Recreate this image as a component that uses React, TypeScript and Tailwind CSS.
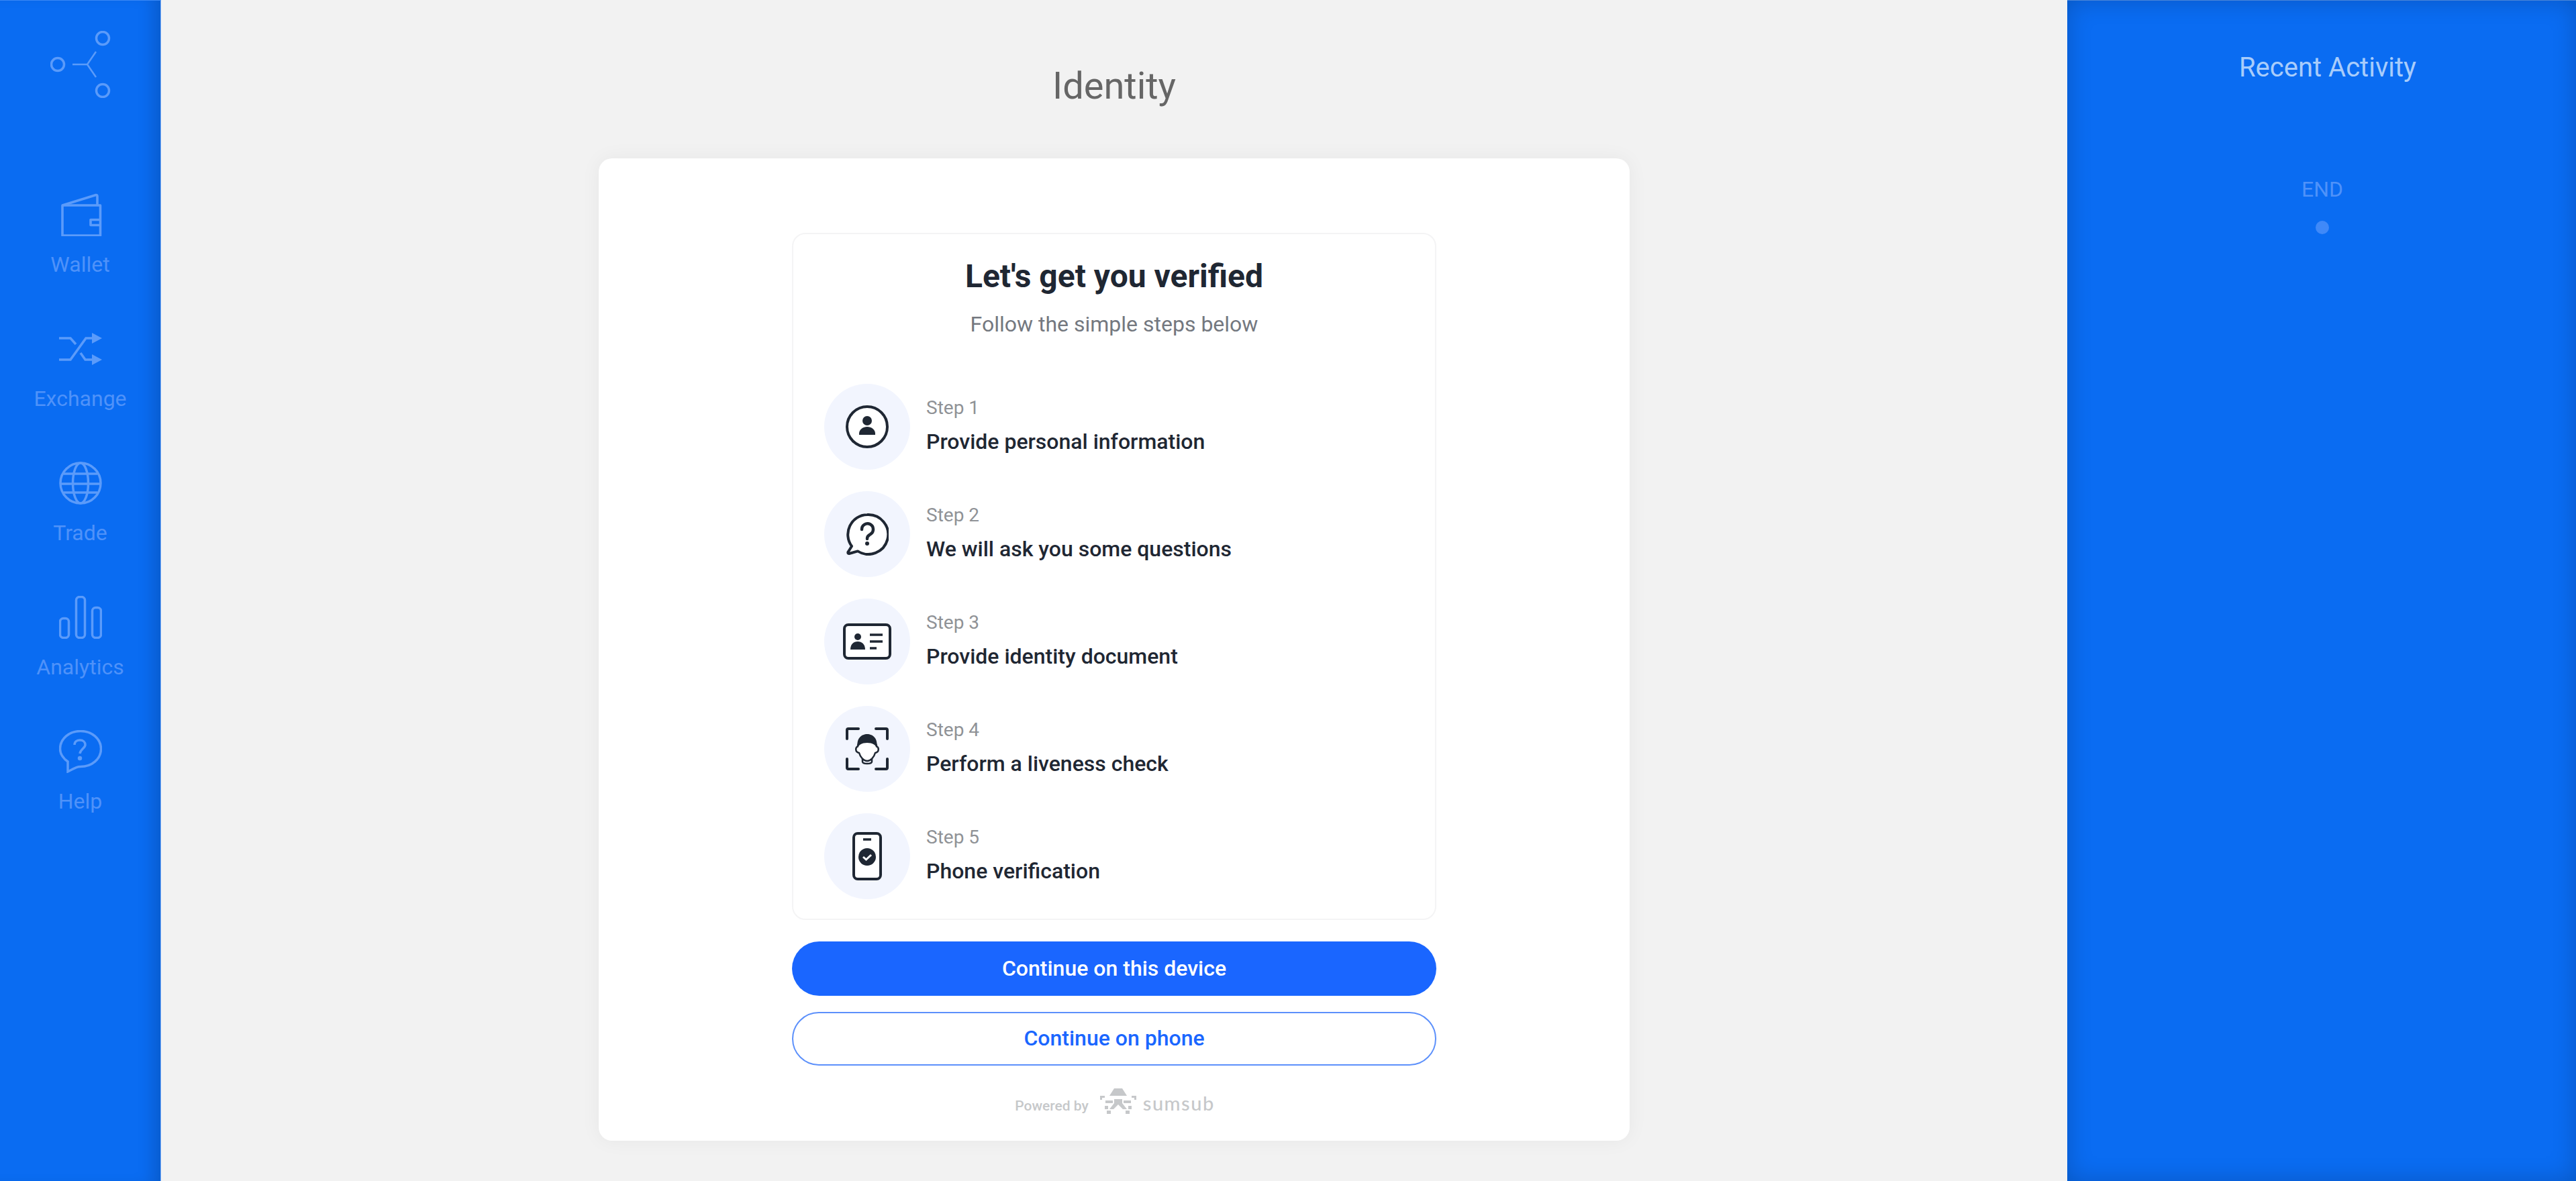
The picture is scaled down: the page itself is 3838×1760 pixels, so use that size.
import type { ReactNode } from "react";

const roboto = "font-['Roboto','Liberation_Sans',sans-serif]";

function NavItem({ label, icon }: { label: string; icon: ReactNode }) {
  return (
    <div className="flex h-[200px] w-full flex-col items-center">
      <div className="h-[64px] w-[64px] text-[#5b9bfa]">{icon}</div>
      <div className="mt-[21px] text-[32px] leading-[42px] text-[#4f92f9]">{label}</div>
    </div>
  );
}

const navItems = [
  {
    label: "Wallet",
    icon: (
      <svg viewBox="0 0 64 64" fill="none" stroke="currentColor" strokeWidth="3.600" strokeLinejoin="round">
        <path d="M5 18h56.500v45H5z" />
        <path d="M5 18l50-15.500q2 0 2 2V18" />
        <path d="M61 39.500H47V47.500H61" />
      </svg>
    ),
  },
  {
    label: "Exchange",
    icon: (
      <svg viewBox="0 0 64 64" fill="none" stroke="currentColor" strokeWidth="3.600">
        <path d="M0 16h17l8 9" />
        <path d="M0 48h17L40 16h10" />
        <path d="M32 38l7 10h10" />
        <path d="M49 8l15 8-15 8zM49 40l15 8-15 8z" fill="currentColor" stroke="none" />
      </svg>
    ),
  },
  {
    label: "Trade",
    icon: (
      <svg viewBox="0 0 64 64" fill="none" stroke="currentColor" strokeWidth="3.500">
        <circle cx="32" cy="32" r="30" />
        <ellipse cx="32" cy="32" rx="11.500" ry="30" />
        <path d="M7 18h50M2 33h60M7 46h50" />
      </svg>
    ),
  },
  {
    label: "Analytics",
    icon: (
      <svg viewBox="0 0 64 64" fill="none" stroke="currentColor" strokeWidth="3.500">
        <rect x="1.500" y="33.500" width="13" height="29" rx="5" />
        <rect x="25.500" y="1.500" width="13" height="61" rx="5" />
        <rect x="49.500" y="17.500" width="13" height="45" rx="5" />
      </svg>
    ),
  },
  {
    label: "Help",
    icon: (
      <svg viewBox="0 0 64 64" fill="none" stroke="currentColor" strokeWidth="3.500">
        <path d="M32 1.500C49 1.500 62.500 13 62.500 28S49 54.500 32 54.500C28 54.500 26 55 13 62V47C6 42 1.500 36 1.500 28 1.500 13 15 1.500 32 1.500Z" />
        <path d="M23 22c0-5 4-7 8-7 5 0 8 3 8 7 0 5-7 6-8 13" />
        <circle cx="31" cy="42" r="1.500" fill="currentColor" />
      </svg>
    ),
  },
];

const darkInk = "#1f2733";

const stepIcons = [
  <svg key="1" width="64" height="64" viewBox="0 0 64 64">
    <circle cx="32" cy="32" r="30" fill="#fff" stroke={darkInk} strokeWidth="4" />
    <circle cx="32" cy="23" r="7" fill={darkInk} />
    <path d="M20 44v-2c0-6 6-10 12-10s12 4 12 10v2z" fill={darkInk} />
  </svg>,
  <svg key="2" width="64" height="64" viewBox="0 0 64 64">
    <path
      d="M32 3A29.500 29.500 0 1 1 18 57.400L5 61C3 61 3 59 4 58L9 50A29.500 29.500 0 0 1 32 3Z"
      fill="#fff"
      stroke={darkInk}
      strokeWidth="4"
      strokeLinejoin="round"
    />
    <path d="M24 25a8.500 8.500 0 1 1 13 7c-3 2-5 3-5 7" fill="none" stroke={darkInk} strokeWidth="4.500" strokeLinecap="round" />
    <circle cx="32" cy="46" r="3" fill={darkInk} />
  </svg>,
  <svg key="3" width="72" height="54" viewBox="0 0 72 54">
    <rect x="2" y="2" width="68" height="50" rx="6" fill="#fff" stroke={darkInk} strokeWidth="4" />
    <circle cx="22" cy="20" r="5" fill={darkInk} />
    <path d="M11 39c0-8 5-12 11-12s11 4 11 12z" fill={darkInk} />
    <path d="M40 17h19M40 27h19M40 37h10" stroke={darkInk} strokeWidth="3.500" />
  </svg>,
  <svg key="4" width="64" height="64" viewBox="0 0 64 64" fill="none">
    <path
      d="M2 17V4q0-2 2-2h15M45 2h15q2 0 2 2v13M2 47v13q0 2 2 2h15M62 47v13q0 2-2 2H45"
      stroke={darkInk}
      strokeWidth="4"
      strokeLinecap="round"
    />
    <path d="M25 47v4c0 4 14 4 14 0v-4" stroke={darkInk} strokeWidth="2.500" />
    <path
      d="M18 28C14 30 14 37 20 38 22 45 27 50 32 50 37 50 42 45 44 38 50 37 50 30 46 28 46 22 38 18 32 18 26 18 18 22 18 28Z"
      fill="#fff"
      stroke={darkInk}
      strokeWidth="2.500"
    />
    <path d="M18 31C15 16 24 10 32 10 40 10 49 16 46 31 45 26 40 23 32 23 24 23 19 26 18 31Z" fill={darkInk} />
  </svg>,
  <svg key="5" width="44" height="72" viewBox="0 0 44 72">
    <rect x="2" y="2" width="40" height="68" rx="6" fill="#fff" stroke={darkInk} strokeWidth="4" />
    <path d="M16 11h12" stroke={darkInk} strokeWidth="3.500" />
    <circle cx="22" cy="37" r="13" fill={darkInk} />
    <path d="M16 37l4.500 4 7.500-7" fill="none" stroke="#fff" strokeWidth="3" />
  </svg>,
];

const steps = [
  "Provide personal information",
  "We will ask you some questions",
  "Provide identity document",
  "Perform a liveness check",
  "Phone verification",
];

function SumsubMark() {
  return (
    <svg className="block" width="54" height="38" viewBox="0 0 54 38" fill="#c6c8ca">
      <path d="M14 11L21 0h12l7 11z" />
      <path d="M0 11h7v3H3v3H0zM47 11h7v6h-3v-3h-4z" />
      <path d="M8 18h11v4H8zM21 16h12v6l7 9h-6l-7-7-7 7h-6l7-9zM35 18h11v4H35z" />
      <path d="M7 26h5v5H7zM42 26h5v5h-5zM10 33h6v5h-6zM38 33h6v5h-6z" />
    </svg>
  );
}

export default function App() {
  return (
    <div className={`flex h-screen w-full overflow-hidden bg-[#f2f2f2] ${roboto}`}>
      <aside className="flex h-full w-[240px] shrink-0 flex-col items-center border-r border-t border-r-[#7fb0f5] border-t-[#3a88f5] bg-[#0a6cf2] shadow-[inset_-22px_0_24px_-12px_rgba(0,0,0,0.16)]">
        <svg className="mt-[45px] text-[#5b9bfa]" width="90" height="100" viewBox="0 0 90 100" fill="none" stroke="currentColor" strokeWidth="3.500">
          <circle cx="11" cy="50" r="9.500" />
          <ellipse cx="78" cy="11" rx="9.500" ry="9.500" />
          <ellipse cx="78" cy="89" rx="9.500" ry="9.500" />
          <path d="M33 50h22l13-19M55 50l13 19" strokeWidth="2.500" />
        </svg>
        <nav className="mt-[142px] flex w-full flex-col items-center">
          {navItems.map((item) => (
            <NavItem key={item.label} label={item.label} icon={item.icon} />
          ))}
        </nav>
      </aside>

      <main className="flex h-full flex-1 flex-col items-center">
        <h1 className="mt-[96px] text-[56px] font-normal leading-[64px] text-[#666666]">Identity</h1>
        <section className="mt-[76px] flex h-[1464px] w-[1536px] flex-col items-center rounded-[20px] bg-white pt-[111px] shadow-[0_0_30px_rgba(0,0,0,0.05)]">
          <div className="flex h-[1024px] w-[960px] flex-col rounded-[20px] border-2 border-[#f4f4f5] pt-[35px]">
            <h2 className="text-center text-[48px] font-bold leading-[56px] text-[#1f2733]">Let's get you verified</h2>
            <p className="mt-[23px] text-center text-[32px] leading-[40px] text-[#74787f]">Follow the simple steps below</p>
            <ul className="mt-[69px] flex flex-col gap-[32px] pl-[46px]">
              {steps.map((title, i) => (
                <li key={title} className="flex h-[128px] items-center gap-[24px]">
                  <div className="flex h-[128px] w-[128px] items-center justify-center rounded-full bg-[#f2f5fe]">
                    {stepIcons[i]}
                  </div>
                  <div className="flex flex-col gap-[14px] pb-[6px]">
                    <div className="text-[28px] font-normal leading-[36px] text-[#8f9296]">Step {i + 1}</div>
                    <div className="text-[32px] font-medium leading-[36px] text-[#1f2733]">{title}</div>
                  </div>
                </li>
              ))}
            </ul>
          </div>
          <button className="mt-[32px] h-[81px] w-[960px] rounded-full bg-[#1a66ff] pb-[2px] text-[32px] font-medium text-white">
            Continue on this device
          </button>
          <button className="mt-[24px] h-[80px] w-[960px] rounded-full border-2 border-[#5c90fb] bg-white pb-[2px] text-[32px] font-medium text-[#1a66ff]">
            Continue on phone
          </button>
          <div className="ml-[2px] mt-[34px] flex h-[38px] items-start">
            <span className="mt-[13px] text-[21px] font-medium leading-[26px] text-[#c6c8ca]">Powered by</span>
            <span className="ml-[17px]">
              <SumsubMark />
            </span>
            <span className="ml-[10px] mt-[7px] font-['Lato',sans-serif] text-[29px] font-medium leading-[30px] tracking-[1.5px] text-[#c6c8ca]">sumsub</span>
          </div>
        </section>
      </main>

      <aside className="flex h-full w-[758px] shrink-0 flex-col items-center border-t border-[#4a86d8] bg-[#0a6cf2] shadow-[inset_0_0_36px_rgba(0,0,0,0.2)]">
        <h3 className="ml-[18px] mt-[77px] text-[40px] font-normal leading-[46px] text-[#a8ccfb]">Recent Activity</h3>
        <div className="ml-[2px] mt-[138px] text-[32px] leading-[40px] text-[#4f92f9]">END</div>
        <div className="ml-[2px] mt-[27px] h-[20px] w-[20px] rounded-full bg-[#4089f8]" />
      </aside>
    </div>
  );
}
